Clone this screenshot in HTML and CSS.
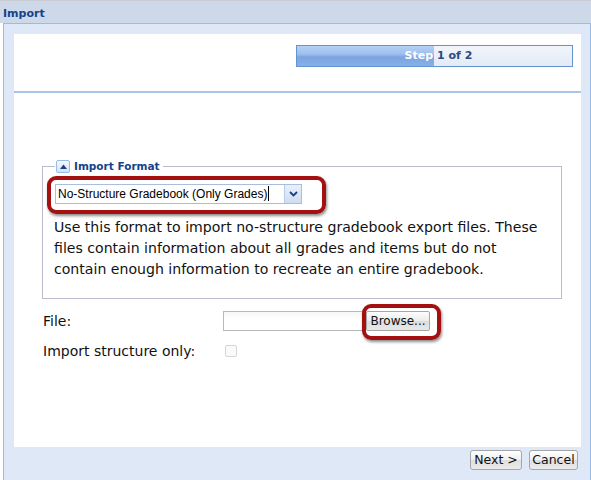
FILE: index.html
```html
<!DOCTYPE html>
<html>
<head>
<meta charset="utf-8">
<link rel="stylesheet" href="styles.css">
</head>
<body>
<div class="header">Import</div>
<div class="panel">
  <div class="top">
    <div class="progress">
      <div class="fill"><span>Step</span></div>
      <div class="rest"><span>1 of 2</span></div>
    </div>
  </div>
  <div class="content">
    <fieldset class="fs">
      <legend><span class="tog"><svg width="7" height="5" viewBox="0 0 7 5"><path d="M0 5 L3.5 0.5 L7 5 Z" fill="#15428b"/></svg></span><span class="lg">Import Format</span></legend>
      <div class="selwrap">
        <div class="combo">
          <div class="ctext">No-Structure Gradebook (Only Grades)<span class="caret"></span></div>
          <div class="cbtn"><svg width="9" height="6" viewBox="0 0 9 6"><path d="M1 1 L4.5 4.5 L8 1" fill="none" stroke="#15428b" stroke-width="1.8"/></svg></div>
        </div>
        <div class="hl hl-sel"></div>
      </div>
      <p class="desc">Use this format to import no-structure gradebook export files. These files contain information about all grades and items but do not contain enough information to recreate an entire gradebook.</p>
    </fieldset>
    <div class="form">
      <div class="lbl">File:</div>
      <div class="filerow">
        <div class="finput"></div>
        <div class="browse">Browse...</div>
        <div class="hl hl-br"></div>
      </div>
      <div class="lbl">Import structure only:</div>
      <div class="chkcell"><span class="chk"></span></div>
    </div>
  </div>
  <div class="bbar">
    <div class="btn btn-next">Next &gt;</div>
    <div class="btn btn-cancel">Cancel</div>
  </div>
</div>
</body>
</html>
```

FILE: styles.css
```css
html, body { margin: 0; padding: 0; background: #fff; }
body { width: 591px; height: 480px; overflow: hidden; font-family: "DejaVu Sans", sans-serif; }

.header {
  height: 22px;
  border-top: 1px solid #c9cdd3;
  background: #cdd8e8;
  color: #15428b;
  font-weight: bold;
  font-size: 11px;
  line-height: 25px;
  padding-left: 3px;
}

.panel {
  box-sizing: border-box;
  margin-left: 3px;
  width: 588px;
  height: 457px;
  border: 1px solid #99bbe8;
  border-bottom: none;
  background: #dfe8f6;
  padding: 10px 9px 0 10px;
}

.top {
  height: 57px;
  background: #fff;
  border-bottom: 2px solid #a9c4ea;
  position: relative;
}
.progress {
  position: absolute;
  left: 282px;
  top: 11px;
  width: 275px;
  height: 20px;
  border: 1px solid #6593cf;
  display: grid;
  grid-template-columns: 137px 1fr;
  font-size: 11px;
  font-weight: bold;
  line-height: 20px;
}
.fill {
  background: linear-gradient(#b4d0f4 0%, #9ec0ee 40%, #7ba5e2 55%, #88b0e6 100%);
  color: #fff;
  text-align: right;
  padding-right: 1px;
}
.rest {
  background: linear-gradient(#f1f5fb, #e3ebf6);
  color: #2a4a7f;
  padding-left: 3px;
}

.content {
  background: #fff;
  height: 354px;
  padding: 66px 19px 0 28px;
  box-sizing: border-box;
}

.fs {
  margin: 0;
  border: 1px solid #b9bccb;
  padding: 0 14px 17px 12px;
  height: 140px;
  box-sizing: border-box;
}
.fs legend {
  padding: 0 3px 0 1px;
  display: flex;
  align-items: center;
  height: 14px;
}
.tog {
  width: 12px;
  height: 11px;
  border: 1px solid #99bbe8;
  border-radius: 2px;
  background: linear-gradient(#f4f8fd, #d6e3f5);
  display: flex;
  align-items: center;
  justify-content: center;
}
.lg {
  color: #15428b;
  font-weight: bold;
  font-size: 10.5px;
  margin-left: 4px;
}

.selwrap {
  position: relative;
  margin-top: 11px;
  width: 247px;
}
.combo {
  display: flex;
  height: 20px;
  border: 1px solid #a9bfd8;
  box-sizing: border-box;
}
.ctext {
  flex: 1;
  font-family: "Liberation Sans", Arial, sans-serif;
  font-size: 12px;
  line-height: 18px;
  padding-left: 2px;
  color: #000;
  white-space: nowrap;
  overflow: hidden;
}
.caret {
  display: inline-block;
  width: 1px;
  height: 15px;
  background: #000;
  vertical-align: -3px;
  margin-left: 1px;
}
.cbtn {
  width: 16px;
  border-left: 1px solid #b8cbe4;
  background: linear-gradient(#e9f0fa, #cfdcf0);
  display: flex;
  align-items: center;
  justify-content: center;
}
.hl {
  position: absolute;
  border: 4px solid #a3100f;
  border-radius: 9px;
  box-shadow: 1px 2px 3px rgba(0,0,0,0.45);
}
.hl-sel { left: -8px; top: -8px; width: 271px; height: 30px; }

.desc {
  margin: 13px 0 0 -1px;
  font-size: 14.1px;
  line-height: 21px;
  color: #111;
}

.form {
  display: grid;
  grid-template-columns: 181px auto;
  row-gap: 12px;
  margin-top: 12px;
  align-items: center;
}
.lbl {
  font-size: 14px;
  color: #111;
  padding-left: 1px;
}
.filerow {
  position: relative;
  display: flex;
  height: 20px;
}
.finput {
  width: 143px;
  height: 20px;
  box-sizing: border-box;
  border: 1px solid #b8b8b8;
  background: linear-gradient(#f6f6f6, #fff 40%);
}
.browse {
  width: 64px;
  height: 20px;
  box-sizing: border-box;
  border: 1px solid #a6a6a6;
  border-radius: 2px;
  background: linear-gradient(#fdfdfd, #ebebeb 50%, #dcdcdc 51%, #e8e8e8);
  font-size: 12px;
  line-height: 18px;
  text-align: center;
  color: #111;
}
.hl-br { left: 139px; top: -7px; width: 71px; height: 28px; }
.chkcell { height: 12px; }
.chk {
  display: block;
  margin-left: 2px;
  width: 10px;
  height: 10px;
  border: 1px solid #d6d6d6;
  border-radius: 2px;
  background: #fafafa;
}

.bbar {
  display: flex;
  justify-content: flex-end;
  gap: 7px;
  padding: 3px 3px 0 0;
}
.btn {
  height: 20px;
  box-sizing: border-box;
  border: 1px solid #a6a6a6;
  border-radius: 3px;
  background: linear-gradient(#ffffff, #eeeeee 50%, #dedede 51%, #ebebeb);
  font-size: 12.5px;
  line-height: 18px;
  text-align: center;
  color: #111;
}
.btn-next { width: 52px; }
.btn-cancel { width: 49px; }
```
